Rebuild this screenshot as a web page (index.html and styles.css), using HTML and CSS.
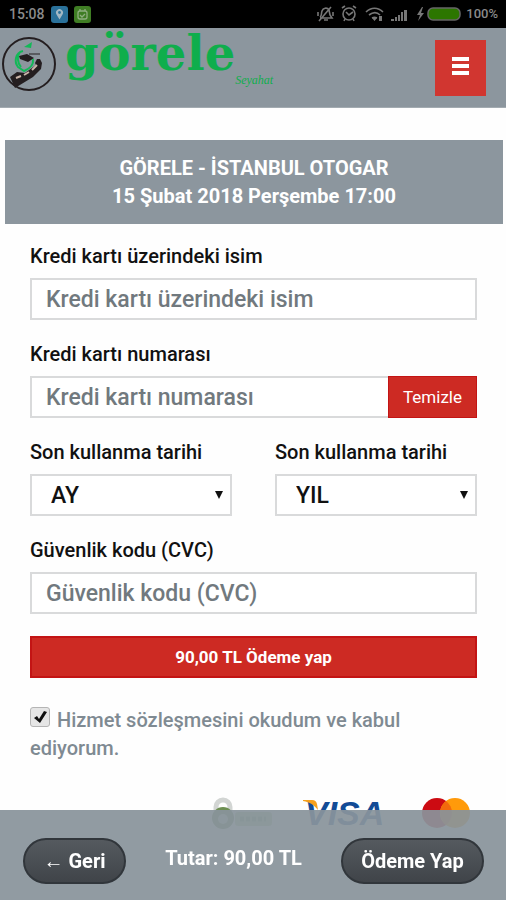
FILE: index.html
```html
<!DOCTYPE html>
<html lang="tr">
<head>
<meta charset="utf-8">
<meta name="viewport" content="width=device-width, initial-scale=1">
<title>Görele Seyahat</title>
<link rel="stylesheet" href="styles.css">
</head>
<body>
<div class="status">
  <span class="clock">15:08</span>
  <svg class="app" viewBox="0 0 17 17" aria-hidden="true"><rect width="17" height="17" rx="3" fill="#2a719a"/><path d="M8.500 13.500L5.500 8.500a3.500 3.500 0 1 1 6 0z" fill="#a3b8c4"/><circle cx="8.500" cy="6.500" r="1.400" fill="#2a719a"/></svg>
  <svg class="app" viewBox="0 0 17 17" aria-hidden="true"><rect width="17" height="17" rx="3" fill="#3f7d24"/><rect x="4" y="5" width="9" height="8" rx="2" fill="none" stroke="#8fae80" stroke-width="1.300"/><path d="M6 9l2 2 3-3M6 3v2M11 3v2" fill="none" stroke="#8fae80" stroke-width="1.300"/></svg>
  <span class="spacer"></span>
  <svg class="icons" viewBox="0 0 146 20" aria-hidden="true">
    <g fill="none" stroke="#777" stroke-width="1.600">
      <path d="M4 13c2-1 1-3 2-6 1-3 5-4 7-1l1 5 2 3H4M8 16h4M3 17L15 3M2 8v4M17 8v4"/>
      <circle cx="33" cy="10" r="6"/><path d="M30 8l3 3 4-3M26 4l3-2M37 2l3 2M29 15l-1 2M37 15l1 2"/>
      <path d="M50 8c5-5 12-5 17 0M53 11c4-3 8-3 11 0M56 14c2-1 3-1 5 0"/>
    </g>
    <path d="M56 14l2.500 3 2.500-3zM63 12h3v5h-3zM75 15h3v2h-3zM79 13h2v4h-2zM82 11h2v6h-2zM85 8h2v9h-2zM88 6h3v11h-3zM106 3l-5 8h3l-2 6 6-8h-3l2-6z" fill="#777"/>
    <rect x="112" y="4" width="32" height="12" rx="5" fill="#2c7600" stroke="#666" stroke-width="1.500"/>
  </svg>
  <span class="charge">100%</span>
</div>

<header class="header">
  <a class="logo" href="#" aria-label="görele Seyahat">
    <svg class="emblem" viewBox="0 0 56 56" aria-hidden="true">
      <circle cx="28" cy="28" r="26" fill="none" stroke="#241e20" stroke-width="2"/>
      <path d="M9 41l7-5 8 1 11-8-1-2 2-4h3l2 4-1 6-8 8-18 11z" fill="#241e20"/>
      <path d="M18 20l8-2 7 4-6 4-8-3z" fill="#241e20"/>
      <path d="M15 42l5-2M23 39l5-3M31 34l5-5" stroke="#c9b4a8" stroke-width="2"/>
      <path d="M28 18h11" stroke="#241e20"/>
      <path d="M22 15c-8 2-9 11-5 16l6 4c5-2 10-5 9-12M19 16c-3 4-3 10 1 15" fill="none" stroke="#12b957" stroke-width="2"/>
      <path d="M23 11l8-5-1 6z" fill="#12b957"/>
    </svg>
    <span class="brand">görele</span><span class="sub">Seyahat</span>
  </a>
  <button class="menu" type="button" aria-label="Menü"><span></span><span></span><span></span></button>
</header>

<section class="summary">
  <div>GÖRELE - İSTANBUL OTOGAR</div>
  <div>15 Şubat 2018 Perşembe 17:00</div>
</section>

<main>
<form class="form">
  <div class="field">
    <label for="name">Kredi kartı üzerindeki isim</label>
    <input class="control" id="name" type="text" placeholder="Kredi kartı üzerindeki isim">
  </div>
  <div class="field">
    <label for="number">Kredi kartı numarası</label>
    <div class="group">
      <input class="control" id="number" type="text" placeholder="Kredi kartı numarası">
      <button class="clear" type="button">Temizle</button>
    </div>
  </div>
  <div class="pair">
    <div class="field">
      <label for="month">Son kullanma tarihi</label>
      <select class="control" id="month"><option>AY</option></select>
    </div>
    <div class="field">
      <label for="year">Son kullanma tarihi</label>
      <select class="control" id="year"><option>YIL</option></select>
    </div>
  </div>
  <div class="field">
    <label for="cvc">Güvenlik kodu (CVC)</label>
    <input class="control" id="cvc" type="text" placeholder="Güvenlik kodu (CVC)">
  </div>
  <button class="pay" type="button">90,00 TL Ödeme yap</button>
  <p class="terms"><input id="terms" type="checkbox" checked> <label for="terms">Hizmet sözleşmesini okudum ve kabul ediyorum.</label></p>
  <div class="cards">
    <svg class="secure" viewBox="0 0 62 34" aria-hidden="true">
      <rect x="23" y="16" width="37" height="14" rx="3" fill="#b9d6a0"/><path d="M28 23h26" stroke="#86a56e" stroke-width="5" stroke-dasharray="4 2"/>
      <path d="M4 15v-4a7 7 0 0 1 14 0v4" fill="none" stroke="#d2d5d3" stroke-width="5"/>
      <circle cx="11" cy="22" r="11" fill="#6d8f52"/><circle cx="11" cy="23" r="5" fill="#c8d6bd"/>
    </svg>
    <svg class="visa" viewBox="0 0 94 44" role="img" aria-label="VISA">
      <text class="visa-text" x="2" y="29">VISA</text>
      <path d="M0 4h9c3 0 4 1 5 4l1 6C11 9 7 6 0 5z" fill="#f5a01d"/>
    </svg>
    <svg class="master" viewBox="0 0 50 34" role="img" aria-label="Mastercard">
      <circle cx="16" cy="17" r="15" fill="#cc0b12"/><circle cx="34" cy="17" r="15" fill="#ff9a0a"/><path d="M25 5a15 15 0 0 1 0 24 15 15 0 0 1 0-24z" fill="#f26a0c"/>
    </svg>
  </div>
</form>
</main>

<footer class="bar">
  <button class="pill" type="button">← Geri</button>
  <span class="total">Tutar: 90,00 TL</span>
  <button class="pill wide" type="button">Ödeme Yap</button>
</footer>
</body>
</html>
```
FILE: styles.css
```css
* { box-sizing: border-box; }
body {
  margin: 0;
  background: #fefefe;
  color: #111;
  font: 500 20px/28px Roboto, "Noto Sans", sans-serif;
}
button, input, select { font: inherit; margin: 0; border-radius: 0; }
button { padding: 0; border: 0; color: #fff; }
svg { display: block; }

.status {
  display: flex;
  align-items: center;
  height: 28px;
  padding: 0 8px 0 9px;
  background: #000;
  color: #8a8a8a;
  font-size: 14px;
}
.clock { width: 42px; }
.app { width: 17px; height: 17px; margin-right: 6px; }
.spacer { flex: 1; }
.icons { width: 146px; height: 20px; margin-right: 4px; }
.charge { font-size: 13px; }

.header {
  display: flex;
  align-items: flex-start;
  justify-content: space-between;
  height: 80px;
  padding: 8px 20px 0 1px;
  background: #8c969e;
  border-bottom: 1px solid #a3abb1;
}
.logo { display: flex; color: #0fae4c; text-decoration: none; }
.emblem { width: 56px; height: 56px; margin-right: 8px; }
.brand { font: 700 48px/34px "DejaVu Serif", serif; }
.sub {
  align-self: flex-end;
  margin-bottom: 6px;
  font: italic 400 12px/12px "Liberation Serif", serif;
}
.menu {
  display: flex;
  flex-direction: column;
  align-items: center;
  justify-content: center;
  gap: 3px;
  width: 51px;
  height: 56px;
  margin-top: 4px;
  padding-bottom: 5px;
  background: #d13630;
}
.menu span { width: 17px; height: 4px; background: #fff; }

.summary {
  margin: 32px 3px 0 5px;
  padding: 14px 0;
  background: #8c969e;
  color: #fff;
  font-weight: 700;
  text-align: center;
}

.form { padding: 18px 29px 0 30px; }
.field { flex: 1; min-width: 0; margin-bottom: 20px; }
.field label { display: block; margin-bottom: 8px; }
.control {
  display: block;
  width: 100%;
  height: 42px;
  padding: 0 14px;
  border: 2px solid #d9dadb;
  background: #fff;
  color: #111;
  font-size: 23px;
}
.control::placeholder { color: #71797e; opacity: 1; }
select.control {
  appearance: none;
  padding: 2px 14px 0 19px;
  background: #fff url("data:image/svg+xml,%3Csvg xmlns='http://www.w3.org/2000/svg' width='8' height='8'%3E%3Cpath d='M0 0h8L4 8z' fill='%23111'/%3E%3C/svg%3E") no-repeat right 7px center;
}
.group { display: flex; }
.group .control { flex: 1; min-width: 0; border-right: 0; }
.clear { width: 89px; border: 1px solid #c31414; background: #cd2a23; font-size: 17px; font-weight: 400; }
.pair { display: flex; gap: 43px; }
.pay {
  display: block;
  width: 100%;
  height: 42px;
  margin-top: 22px;
  border: 2px solid #c31414;
  background: #cd2a23;
  font-size: 17px;
  font-weight: 700;
}
.terms { margin: 28px 0 0; color: #7f8a92; }
.terms input {
  appearance: none;
  width: 20px;
  height: 20px;
  margin-right: 2px;
  border: 1px solid #b5b5b5;
  border-radius: 3px;
  background: #e6e6e6 url("data:image/svg+xml,%3Csvg xmlns='http://www.w3.org/2000/svg' width='14' height='14'%3E%3Cpath d='M1 8l3-2 2 3 5-8 3 1-7 11z' fill='%23111'/%3E%3C/svg%3E") no-repeat center;
}
.cards { display: flex; justify-content: flex-end; padding: 34px 6px 0 0; }
.secure { width: 62px; height: 34px; margin-right: 29px; }
.visa { width: 94px; height: 44px; margin-right: 24px; }
.visa-text { font: italic 700 34px "Liberation Sans", sans-serif; fill: #124b96; }
.master { width: 50px; height: 34px; }

.bar {
  position: fixed;
  right: 0;
  bottom: 0;
  left: 0;
  display: flex;
  align-items: center;
  justify-content: space-between;
  height: 90px;
  padding: 12px 22px 0 23px;
  background: rgba(137, 147, 155, .93);
  color: #fff;
  font-weight: 700;
}
.pill {
  width: 103px;
  height: 46px;
  border: 2px solid #31363b;
  border-radius: 23px;
  background: linear-gradient(#555a5f, #404449);
}
.wide { width: 143px; }
.total { padding-bottom: 6px; }
```
